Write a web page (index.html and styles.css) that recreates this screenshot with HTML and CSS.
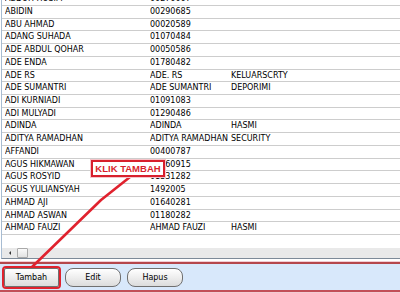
FILE: index.html
```html
<!DOCTYPE html>
<html>
<head>
    <title>Data Karyawan</title>
    <link rel="stylesheet" href="styles.css">
</head>
<body>
    <div class="window">
        <div class="list">
            <div class="rows">
                <div class="row first"><span>ABDUH HUSIM</span><span>00276067</span><span></span></div>
                <div class="row"><span>ABIDIN</span><span>00290685</span><span></span></div>
                <div class="row"><span>ABU AHMAD</span><span>00020589</span><span></span></div>
                <div class="row"><span>ADANG SUHADA</span><span>01070484</span><span></span></div>
                <div class="row"><span>ADE ABDUL QOHAR</span><span>00050586</span><span></span></div>
                <div class="row"><span>ADE ENDA</span><span>01780482</span><span></span></div>
                <div class="row"><span>ADE RS</span><span>ADE. RS</span><span>KELUARSCRTY</span></div>
                <div class="row"><span>ADE SUMANTRI</span><span>ADE SUMANTRI</span><span>DEPORIMI</span></div>
                <div class="row"><span>ADI KURNIADI</span><span>01091083</span><span></span></div>
                <div class="row"><span>ADI MULYADI</span><span>01290486</span><span></span></div>
                <div class="row"><span>ADINDA</span><span>ADINDA</span><span>HASMI</span></div>
                <div class="row"><span>ADITYA RAMADHAN</span><span>ADITYA RAMADHAN</span><span>SECURITY</span></div>
                <div class="row"><span>AFFANDI</span><span>00400787</span><span></span></div>
                <div class="row"><span>AGUS HIKMAWAN</span><span>01360915</span><span></span></div>
                <div class="row"><span>AGUS ROSYID</span><span>01331282</span><span></span></div>
                <div class="row"><span>AGUS YULIANSYAH</span><span>1492005</span><span></span></div>
                <div class="row"><span>AHMAD AJI</span><span>01640281</span><span></span></div>
                <div class="row"><span>AHMAD ASWAN</span><span>01180282</span><span></span></div>
                <div class="row"><span>AHMAD FAUZI</span><span>AHMAD FAUZI</span><span>HASMI</span></div>
            </div>
            <div class="hscroll">
                <span class="arrow-left"></span>
                <span class="thumb"></span>
            </div>
        </div>

        <div class="panel">
            <button class="btn btn-tambah">Tambah</button>
            <button class="btn">Edit</button>
            <button class="btn">Hapus</button>
        </div>

        <!-- annotation -->
        <svg class="pointer" width="400" height="293" viewBox="0 0 400 293">
            <polyline points="130,177 101,200 32,267" fill="none" stroke="#e0222e" stroke-width="2.6" stroke-linejoin="round"/>
        </svg>
        <div class="callout">KLIK TAMBAH</div>
    </div>
</body>
</html>
```

FILE: styles.css
```css
body {
    margin: 0;
    background: #ffffff;
    font-family: "DejaVu Sans", sans-serif;
    font-size: 8px;
    color: #000000;
}
.window {
    position: relative;
    width: 400px;
    height: 293px;
    overflow: hidden;
}
.list {
    display: flex;
    flex-direction: column;
    height: 259px;
    margin-left: 1px;
    border-left: 1px solid #a7bcd2;
    border-bottom: 1px solid #7d8a98;
    box-sizing: border-box;
}
.rows {
    flex: 1;
    overflow: hidden;
}
.row {
    display: grid;
    grid-template-columns: 145px 81px 1fr;
    height: 12.72px;
    line-height: 12px;
    padding-left: 3px;
    border-bottom: 1px solid #cdcdcd;
    box-sizing: border-box;
    white-space: nowrap;
}
.row span {
    overflow: hidden;
}
.row.first {
    margin-top: -6.72px;
}
.hscroll {
    display: flex;
    align-items: center;
    gap: 6px;
    height: 10px;
    padding-left: 7px;
    background: #e9e9e9;
}
.arrow-left {
    width: 0;
    height: 0;
    border-top: 2px solid transparent;
    border-bottom: 2px solid transparent;
    border-right: 2px solid #333333;
}
.thumb {
    width: 9px;
    height: 8px;
    background: linear-gradient(#fafafa, #e2e2e2);
    border: 1px solid #a9a9a9;
    border-radius: 1px;
}
.panel {
    display: flex;
    gap: 6px;
    margin-top: 3px;
    height: 30px;
    padding: 4px 0 0 4px;
    background: #d8e8fb;
    border-top: 2px solid #b5474c;
    border-bottom: 2px solid #c24f58;
    box-shadow: 0 0 0 1px #f2cdd3;
    box-sizing: border-box;
}
.btn {
    width: 56px;
    height: 19px;
    padding: 0;
    font-family: inherit;
    font-size: 8px;
    color: #000000;
    background: linear-gradient(#ffffff, #ececec 55%, #dcdcdc);
    border: 1px solid #707070;
    border-radius: 8px;
}
.btn-tambah {
    width: 55px;
    border-radius: 2px;
    outline: 2px solid #e0222e;
}
.pointer {
    position: absolute;
    left: 0;
    top: 0;
}
.callout {
    position: absolute;
    left: 91px;
    top: 160px;
    width: 74px;
    height: 17px;
    border: 2px solid #d81f2c;
    background: #ffffff;
    box-shadow: 0 0 0 1px #f6c5ca;
    box-sizing: border-box;
    color: #d81f2c;
    font-family: "Liberation Sans", Arial, sans-serif;
    font-weight: bold;
    font-size: 9.5px;
    line-height: 13px;
    text-align: center;
}
```
